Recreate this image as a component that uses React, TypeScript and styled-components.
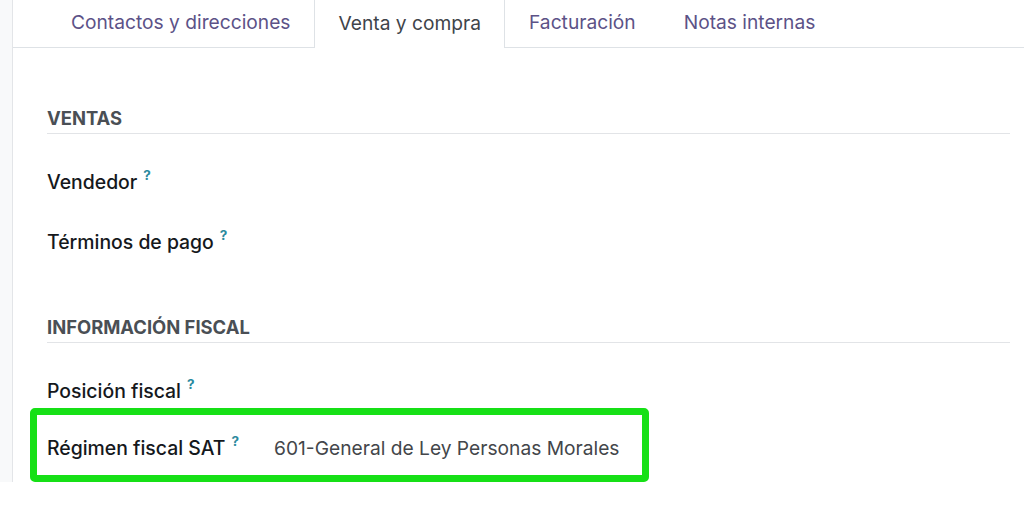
import React from 'react'
import styled, { createGlobalStyle } from 'styled-components'

const GlobalStyle = createGlobalStyle`
    html, body {
        margin: 0;
        padding: 0;
        background: #ffffff;
        overflow: hidden;
    }
    body {
        font-family: Inter, "Noto Sans", sans-serif;
        -webkit-font-smoothing: antialiased;
    }
`

const StyledPage = styled.div`
    display: flex;
    height: 482px;
    background-color: #f8f9fa;
`

const StyledGutter = styled.div`
    width: 12px;
    flex-shrink: 0;
`

const StyledSheet = styled.div`
    flex: 1;
    display: flex;
    flex-direction: column;
    background-color: white;
    border-left: 1px solid #e3e5e8;
    min-width: 0;
`

const StyledTabBar = styled.div`
    display: flex;
    height: 47px;
    padding-left: 34px;
    border-bottom: 1px solid #dee2e6;
`

const StyledTab = styled.div<{ $active?: boolean }>`
    display: flex;
    align-items: center;
    padding: 0 23px 3px;
    font-size: 19.2px;
    color: ${(p) => (p.$active ? '#3f444a' : '#5c5287')};
    border-left: 1px solid ${(p) => (p.$active ? '#dee2e6' : 'transparent')};
    border-right: 1px solid ${(p) => (p.$active ? '#dee2e6' : 'transparent')};
    background-color: white;
    margin-bottom: ${(p) => (p.$active ? '-1px' : '0')};
    white-space: nowrap;
`

const StyledContent = styled.div`
    padding: 58px 14px 0 34px;
    display: flex;
    flex-direction: column;
`

const StyledSection = styled.div<{ $gap?: number }>`
    display: flex;
    flex-direction: column;
    margin-top: ${(p) => p.$gap ?? 0}px;
`

const StyledSectionTitle = styled.div`
    font-size: 18.4px;
    font-weight: 700;
    line-height: 24px;
    color: #4a4f55;
    padding-bottom: 3px;
    border-bottom: 1px solid #e2e4e7;
    text-transform: uppercase;
`

const StyledFieldList = styled.div<{ $gap: number; $top: number }>`
    display: flex;
    flex-direction: column;
    gap: ${(p) => p.$gap}px;
    padding-top: ${(p) => p.$top}px;
`

const StyledField = styled.div`
    display: grid;
    grid-template-columns: 227px 1fr;
    align-items: center;
    height: 34px;
`

const StyledLabel = styled.div`
    font-size: 19.4px;
    font-weight: 500;
    color: #15181c;
    white-space: nowrap;
`

const StyledHelp = styled.sup`
    font-size: 13.5px;
    font-weight: 700;
    color: #2b8a9e;
    margin-left: 6px;
    vertical-align: 9px;
    line-height: 0;
`

const StyledValue = styled.div`
    font-size: 19.2px;
    color: #43464a;
    white-space: nowrap;
`

const StyledHighlight = styled.div`
    margin: 0 0 0 -17px;
    width: 595px;
    padding: 16px 0 10px 10px;
    border: 7px solid #16e016;
    border-radius: 5px;
`

type FieldProps = { label: string; value?: string }

const Field = ({ label, value }: FieldProps) => (
    <StyledField>
        <StyledLabel>
            {label}
            <StyledHelp>?</StyledHelp>
        </StyledLabel>
        {value && <StyledValue>{value}</StyledValue>}
    </StyledField>
)

const tabs = ['Contactos y direcciones', 'Venta y compra', 'Facturación', 'Notas internas']

const App = () => {
    return (
        <>
            <GlobalStyle />
            <StyledPage>
                <StyledGutter />
                <StyledSheet>
                    <StyledTabBar>
                        {tabs.map((t) => (
                            <StyledTab key={t} $active={t === 'Venta y compra'}>
                                {t}
                            </StyledTab>
                        ))}
                    </StyledTabBar>
                    <StyledContent>
                        <StyledSection>
                            <StyledSectionTitle>Ventas</StyledSectionTitle>
                            <StyledFieldList $gap={26} $top={31}>
                                <Field label="Vendedor" />
                                <Field label="Términos de pago" />
                            </StyledFieldList>
                        </StyledSection>
                        <StyledSection $gap={56}>
                            <StyledSectionTitle>Información fiscal</StyledSectionTitle>
                            <StyledFieldList $gap={0} $top={31}>
                                <Field label="Posición fiscal" />
                                <StyledHighlight>
                                    <Field
                                        label="Régimen fiscal SAT"
                                        value="601-General de Ley Personas Morales"
                                    />
                                </StyledHighlight>
                            </StyledFieldList>
                        </StyledSection>
                    </StyledContent>
                </StyledSheet>
            </StyledPage>
        </>
    )
}

export default App
